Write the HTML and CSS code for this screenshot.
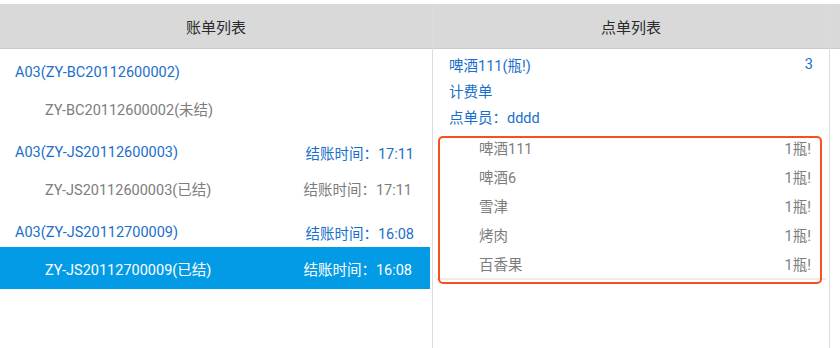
FILE: index.html
```html
<!DOCTYPE html>
<html lang="zh-CN">
<head>
    <meta charset="UTF-8">
    <title>账单列表</title>
    <link rel="stylesheet" href="styles.css">
</head>
<body>
    <div class="page">
        <!-- Bills -->
        <div class="col col-bills">
            <div class="col-head">账单列表</div>
            <div class="bill-group">
                <div class="bill-title"><span>A03(ZY-BC20112600002)</span></div>
                <div class="bill-item"><span>ZY-BC20112600002(未结)</span></div>
            </div>
            <div class="bill-group">
                <div class="bill-title"><span>A03(ZY-JS20112600003)</span><span>结账时间：17:11</span></div>
                <div class="bill-item"><span>ZY-JS20112600003(已结)</span><span>结账时间：17:11</span></div>
            </div>
            <div class="bill-group">
                <div class="bill-title"><span>A03(ZY-JS20112700009)</span><span>结账时间：16:08</span></div>
                <div class="bill-item active"><span>ZY-JS20112700009(已结)</span><span>结账时间：16:08</span></div>
            </div>
        </div>

        <!-- Orders -->
        <div class="col col-orders">
            <div class="col-head">点单列表</div>
            <div class="order-info">
                <div class="info-row"><span>啤酒111(瓶!)</span><span>3</span></div>
                <div class="info-row"><span>计费单</span></div>
                <div class="info-row"><span>点单员：dddd</span></div>
            </div>
            <div class="order-items">
                <div class="order-item"><span>啤酒111</span><span>1瓶!</span></div>
                <div class="order-item"><span>啤酒6</span><span>1瓶!</span></div>
                <div class="order-item"><span>雪津</span><span>1瓶!</span></div>
                <div class="order-item"><span>烤肉</span><span>1瓶!</span></div>
                <div class="order-item"><span>百香果</span><span>1瓶!</span></div>
                <div class="mark"></div>
            </div>
        </div>

        <div class="col col-rest">
            <div class="col-head"></div>
        </div>
    </div>
</body>
</html>
```

FILE: styles.css
```css
* { box-sizing: border-box; margin: 0; padding: 0; }
body { background: #fff; font-family: Roboto, "Noto Sans CJK TC", sans-serif; font-size: 14.5px; }

.page { display: flex; height: 348px; padding-top: 4px; }

/* Columns */
.col { display: flex; flex-direction: column; }
.col-bills { width: 433px; border-right: 1px solid #dcdcdc; }
.col-orders { width: 397px; border-right: 1px solid #dcdcdc; }
.col-rest { flex: 1; }

.col-head {
    height: 45px; background: #d9d9d9; border-bottom: 1px solid #cbcbcb;
    display: flex; justify-content: center; align-items: center;
    font-size: 15px; color: #2b2b2b;
}

/* Bill list */
.bill-group { margin-top: 8px; }
.bill-title, .bill-item { display: flex; justify-content: space-between; align-items: center; padding-right: 18px; }
.bill-title { height: 30px; padding-left: 15px; color: #1b6fcc; padding-top: 1px; }
.bill-item { height: 42px; padding-left: 45px; color: #7d7d7d; margin-right: 2px; }
.bill-item.active { background: #039be5; color: #fff; }

/* Order info */
.order-info { padding: 2px 16px 0 16px; color: #1b6fcc; }
.info-row { height: 26px; display: flex; justify-content: space-between; align-items: center; }

/* Order items */
.order-items { position: relative; margin: 4px 3px 0 3px; border-bottom: 2px solid #ececec; }
.order-item { height: 29px; display: flex; justify-content: space-between; align-items: center; padding: 0 15px 0 43px; color: #7d7d7d; }

/* Highlight frame */
.mark {
    position: absolute; top: 3px; left: 2px; right: 4px; height: 148px;
    border: 2px solid #f4511e; border-radius: 5px;
}
```
